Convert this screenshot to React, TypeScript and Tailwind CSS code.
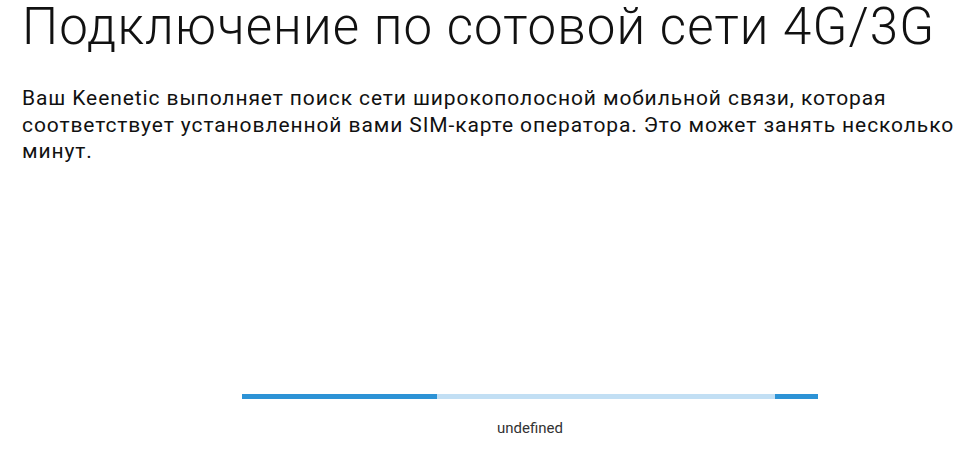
export default function App() {
  return (
    <div className="min-h-screen bg-white font-['Roboto',sans-serif] pl-[22px] pr-[8px]">
      <h1 className="text-[51px] leading-[54px] font-light tracking-[1.1px] text-[#111]">
        Подключение по сотовой сети 4G/3G
      </h1>

      <p className="mt-[31px] text-[21px] leading-[26.5px] tracking-[0.9px] text-[#111]">
        Ваш Keenetic выполняет поиск сети широкополосной мобильной связи, которая
        соответствует установленной вами SIM-карте оператора. Это может занять
        несколько минут.
      </p>

      {/* indeterminate progress */}
      <div className="mt-[229px] ml-[220px] w-[576px]">
        <div className="flex h-[5px] bg-[#c2dff4]">
          <div className="w-[195px] bg-[#2d93d6]" />
          <div className="flex-1" />
          <div className="w-[43px] bg-[#2d93d6]" />
        </div>
        <p className="mt-[19px] text-center text-[15px] leading-[20px] text-[#333]">undefined</p>
      </div>
    </div>
  );
}
